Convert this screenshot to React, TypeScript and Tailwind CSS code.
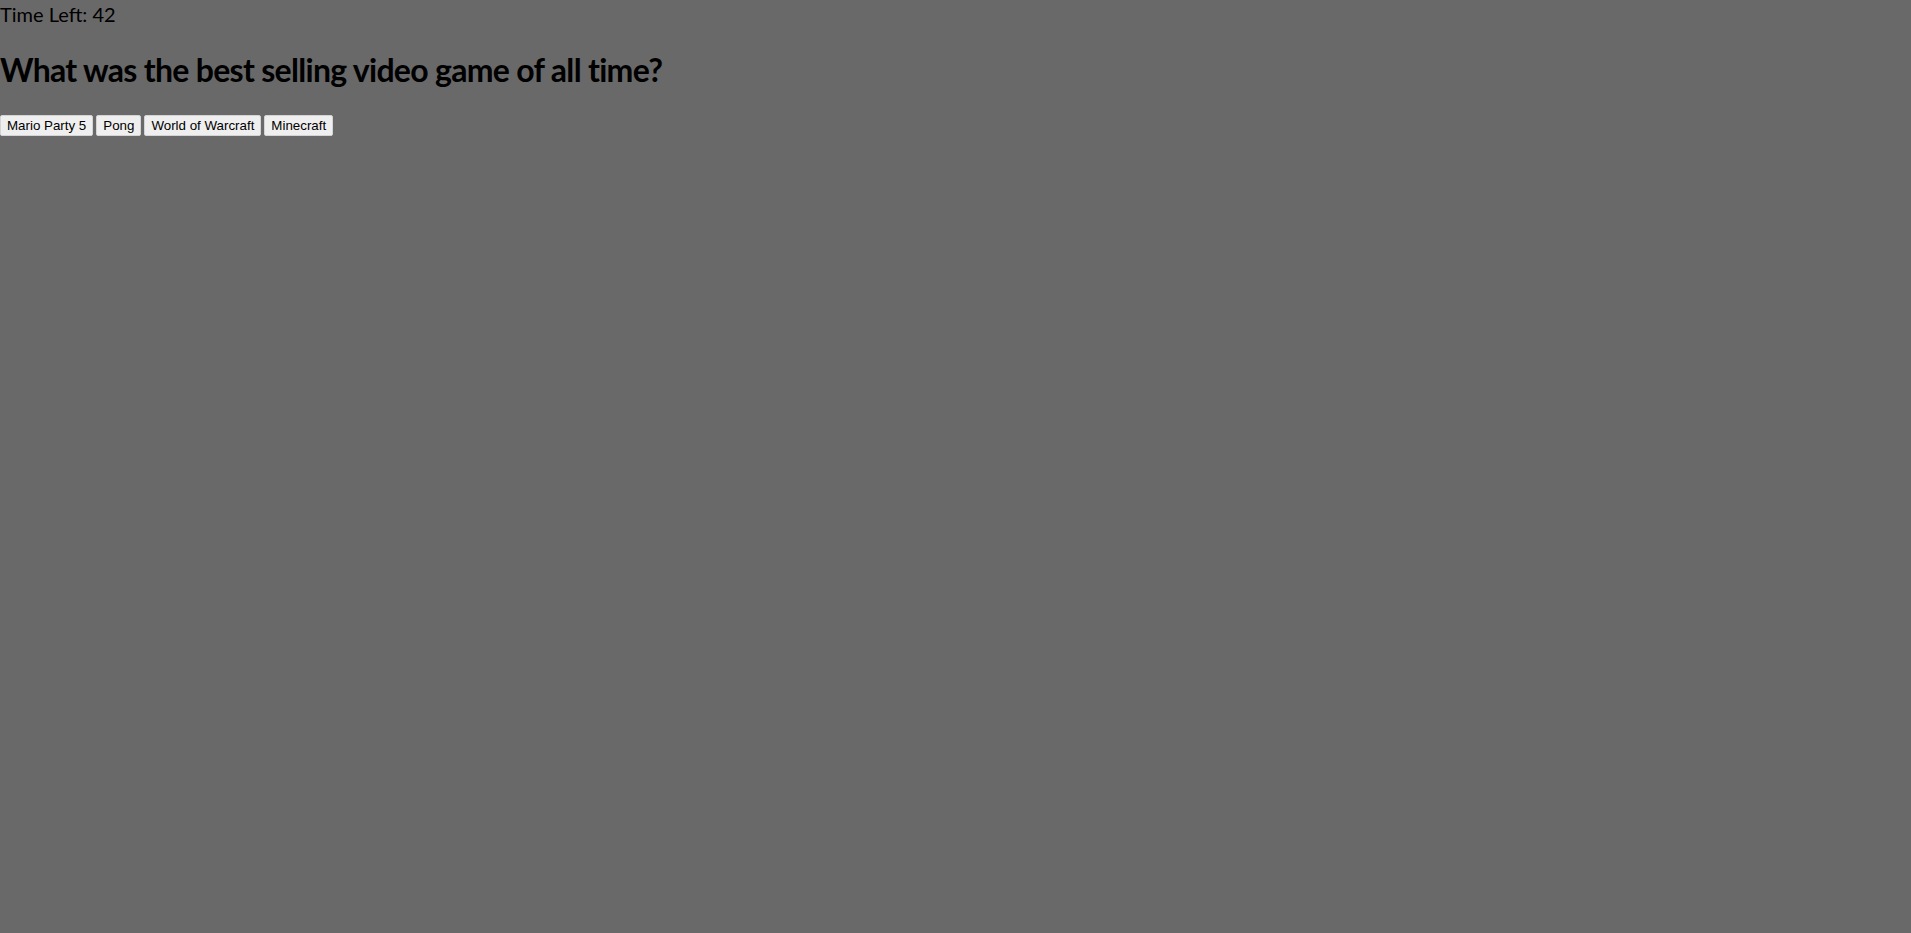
const answers = ['Mario Party 5', 'Pong', 'World of Warcraft', 'Minecraft']

function App() {
  return (
    <div className="min-h-screen bg-[#696969] text-black font-['Comic_Sans_MS',Lato,sans-serif]">
      <div className="text-[20px] leading-[24px] pt-[2px]">Time Left: 42</div>
      <h1 className="text-[32px] font-bold tracking-[-0.7px] leading-[38px] mt-[25px] mb-[26px]">
        What was the best selling video game of all time?
      </h1>
      <div className="flex gap-[3px]">
        {answers.map((a) => (
          <button
            key={a}
            className="h-[21px] px-[6px] bg-[#efefef] border border-[#d4d4d4] rounded-[2px] text-[13.33px] leading-[15px] font-['Liberation_Sans',Arial,sans-serif]"
          >
            {a}
          </button>
        ))}
      </div>
    </div>
  )
}

export default App
